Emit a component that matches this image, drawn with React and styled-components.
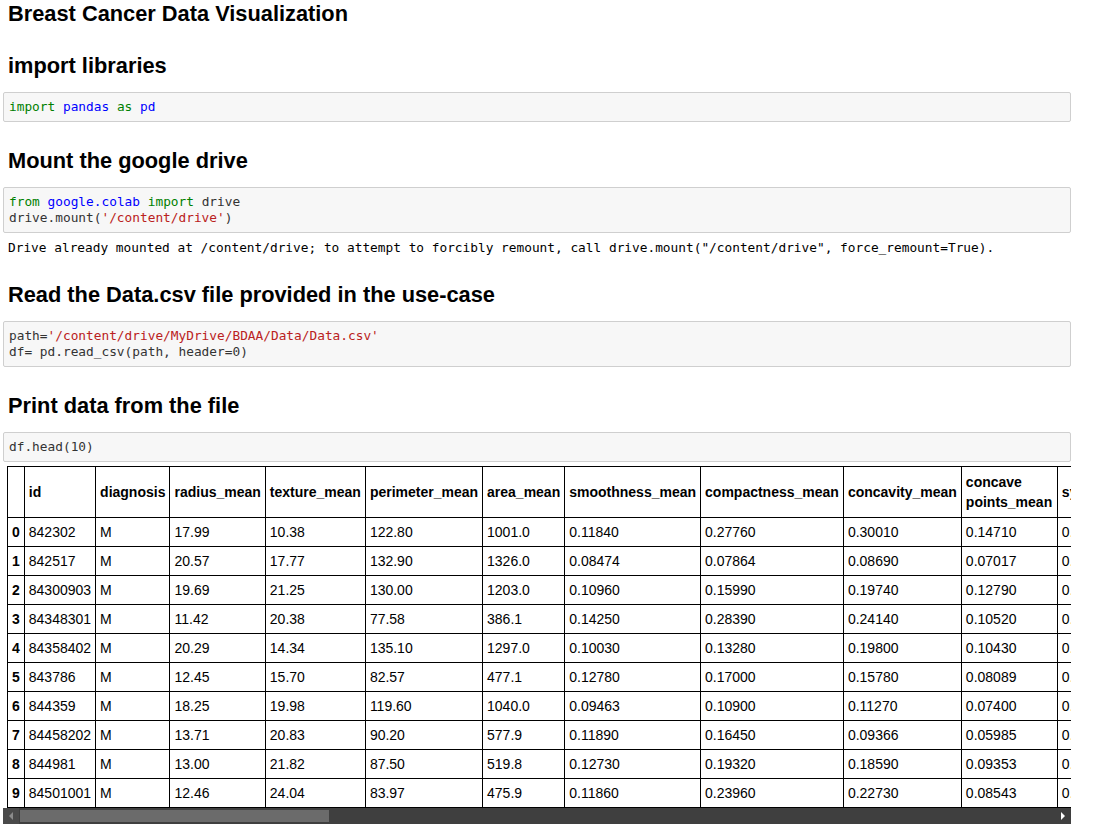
import styled, { createGlobalStyle } from "styled-components";

const Global = createGlobalStyle`
  html, body {
    margin: 0;
    background: #fff;
  }
  body {
    font-family: "Liberation Sans", Arial, sans-serif;
    color: #000;
  }
`;

const Page = styled.main`
  width: 1068px;
  padding: 2px 0 0 3px;
  display: flex;
  flex-direction: column;
`;

const Heading = styled.h2`
  margin: ${(p) => (p.$first ? "0 0 1px" : "27px 0 14px")};
  padding-left: 5px;
  font-size: 21.8px;
  line-height: 24px;
  font-weight: bold;
  color: #000;
`;

const CodeCell = styled.pre`
  margin: 0;
  padding: 6px 5px;
  background: #f7f7f7;
  border: 1px solid #cfcfcf;
  border-radius: 2px;
  font-family: "DejaVu Sans Mono", "Liberation Mono", monospace;
  font-size: 12.8px;
  line-height: 16px;
  color: #333;
  white-space: pre;
`;

const Kw = styled.span`
  color: #008000;
`;

const Ns = styled.span`
  color: #0000ff;
`;

const Str = styled.span`
  color: #ba2121;
`;

const Output = styled.pre`
  margin: 7px 0 0;
  padding-left: 5px;
  font-family: "DejaVu Sans Mono", "Liberation Mono", monospace;
  font-size: 12.8px;
  line-height: 16px;
  color: #000;
`;

const TableScroll = styled.div`
  margin-top: 4px;
  width: 1068px;
  overflow: hidden;
`;

const DataTable = styled.table`
  margin-left: 4px;
  border-collapse: collapse;
  font-size: 14px;
  white-space: nowrap;

  th,
  td {
    border: 1px solid #000;
    padding: 5px 4px;
    text-align: left;
    vertical-align: middle;
  }
  thead th {
    line-height: 20px;
    height: 40px;
  }
  tbody td,
  tbody th {
    line-height: 18px;
  }
  th {
    font-weight: bold;
  }
`;

const Wrap = styled.span`
  display: inline-block;
  white-space: normal;
  width: 87px;
`;

const ScrollBar = styled.div`
  height: 16px;
  background: #3f3f3f;
  display: flex;
  align-items: center;
`;

const Arrow = styled.div`
  width: 16px;
  height: 16px;
  display: flex;
  align-items: center;
  justify-content: center;
  background: ${(p) => (p.$left ? "#4a4a4a" : "#3f3f3f")};
  &::after {
    content: "";
    border-top: 4px solid transparent;
    border-bottom: 4px solid transparent;
    ${(p) =>
      p.$left
        ? "border-right: 4px solid #8a8a8a;"
        : "border-left: 4px solid #fff;"}
  }
`;

const Thumb = styled.div`
  width: 309px;
  height: 12px;
  margin-left: 1px;
  background: #6b6b6b;
`;

const Track = styled.div`
  flex: 1;
`;

const columns = [
  "id",
  "diagnosis",
  "radius_mean",
  "texture_mean",
  "perimeter_mean",
  "area_mean",
  "smoothness_mean",
  "compactness_mean",
  "concavity_mean",
  "concave points_mean",
  "symmetry_mean",
];

const rows = [
  ["842302", "M", "17.99", "10.38", "122.80", "1001.0", "0.11840", "0.27760", "0.30010", "0.14710", "0.24190"],
  ["842517", "M", "20.57", "17.77", "132.90", "1326.0", "0.08474", "0.07864", "0.08690", "0.07017", "0.18120"],
  ["84300903", "M", "19.69", "21.25", "130.00", "1203.0", "0.10960", "0.15990", "0.19740", "0.12790", "0.20690"],
  ["84348301", "M", "11.42", "20.38", "77.58", "386.1", "0.14250", "0.28390", "0.24140", "0.10520", "0.25970"],
  ["84358402", "M", "20.29", "14.34", "135.10", "1297.0", "0.10030", "0.13280", "0.19800", "0.10430", "0.18090"],
  ["843786", "M", "12.45", "15.70", "82.57", "477.1", "0.12780", "0.17000", "0.15780", "0.08089", "0.20870"],
  ["844359", "M", "18.25", "19.98", "119.60", "1040.0", "0.09463", "0.10900", "0.11270", "0.07400", "0.17940"],
  ["84458202", "M", "13.71", "20.83", "90.20", "577.9", "0.11890", "0.16450", "0.09366", "0.05985", "0.21960"],
  ["844981", "M", "13.00", "21.82", "87.50", "519.8", "0.12730", "0.19320", "0.18590", "0.09353", "0.23500"],
  ["84501001", "M", "12.46", "24.04", "83.97", "475.9", "0.11860", "0.23960", "0.22730", "0.08543", "0.20300"],
];

export default function App() {
  return (
    <Page>
      <Global />
      <Heading $first>Breast Cancer Data Visualization</Heading>

      <Heading>import libraries</Heading>
      <CodeCell>
        <Kw>import</Kw> <Ns>pandas</Ns> <Kw>as</Kw> <Ns>pd</Ns>
      </CodeCell>

      <Heading>Mount the google drive</Heading>
      <CodeCell>
        <Kw>from</Kw> <Ns>google.colab</Ns> <Kw>import</Kw> drive{"\n"}
        drive.mount(<Str>'/content/drive'</Str>)
      </CodeCell>
      <Output>
        Drive already mounted at /content/drive; to attempt to forcibly remount, call drive.mount("/content/drive", force_remount=True).
      </Output>

      <Heading>Read the Data.csv file provided in the use-case</Heading>
      <CodeCell>
        path=<Str>'/content/drive/MyDrive/BDAA/Data/Data.csv'</Str>{"\n"}
        df= pd.read_csv(path, header=0)
      </CodeCell>

      <Heading>Print data from the file</Heading>
      <CodeCell>df.head(10)</CodeCell>

      <TableScroll>
        <DataTable>
          <thead>
            <tr>
              <th></th>
              {columns.map((c) => (
                <th key={c}>
                  {c === "concave points_mean" ? <Wrap>{c}</Wrap> : c}
                </th>
              ))}
            </tr>
          </thead>
          <tbody>
            {rows.map((r, i) => (
              <tr key={i}>
                <th>{i}</th>
                {r.map((v, j) => (
                  <td key={j}>{v}</td>
                ))}
              </tr>
            ))}
          </tbody>
        </DataTable>
      </TableScroll>
      <ScrollBar>
        <Arrow $left />
        <Thumb />
        <Track />
        <Arrow />
      </ScrollBar>
    </Page>
  );
}
